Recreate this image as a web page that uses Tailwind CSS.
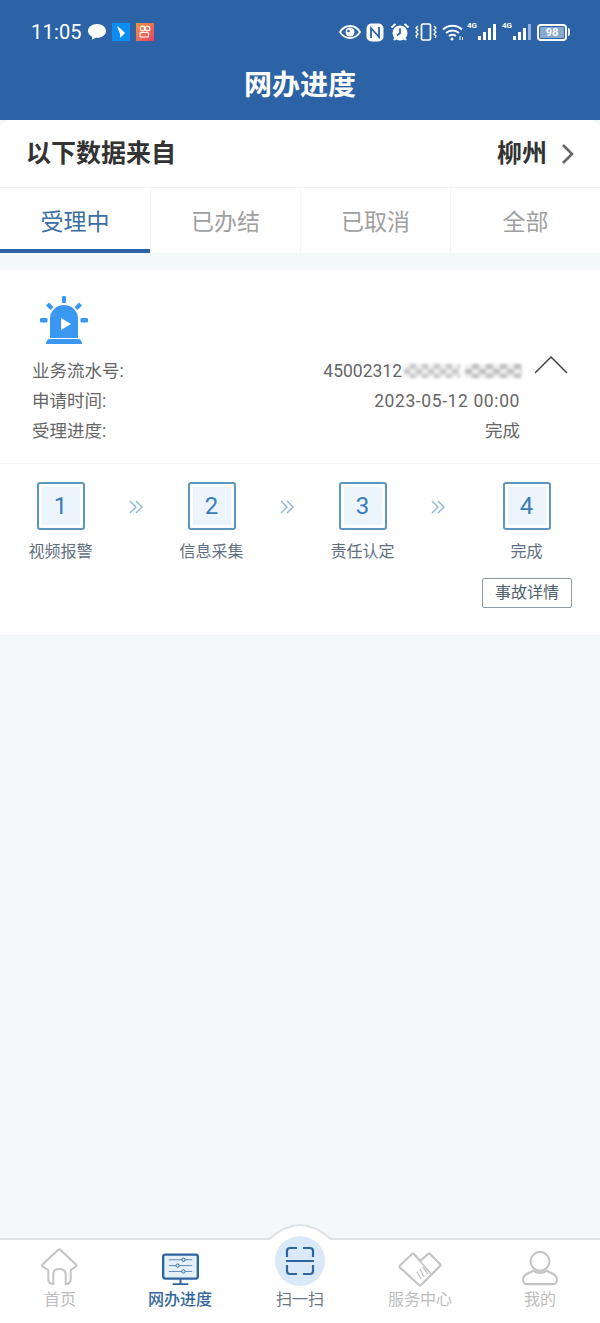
<!DOCTYPE html>
<html lang="zh-CN">
<head>
<meta charset="UTF-8">
<meta name="viewport" content="width=device-width, initial-scale=1.0">
<title>网办进度</title>
<script src="https://cdn.jsdelivr.net/npm/@tailwindcss/browser@4"></script>
</head>
<body class="bg-[#f4f8f9] font-['Roboto','Noto_Sans_CJK_SC',sans-serif]">
<div class="w-[600px] h-[1323px] flex flex-col overflow-hidden">

  <!-- header -->
  <header class="h-[120px] shrink-0 bg-[#2b63a6] text-white">
    <div class="h-[64px] pl-[31px] pr-[30px] flex items-center justify-between">
      <div class="flex items-center">
        <span class="text-[20px] leading-none tracking-[0.2px]">11:05</span>
        <svg class="ml-[5px]" width="20" height="18" viewBox="0 0 20 18"><path d="M10 1C5 1 1 4 1 8c0 2.500 1.700 4.500 4.200 5.700l-.5 3.100L9 14.800h1c5 0 9-3 9-6.800S15 1 10 1z" fill="#fff"/></svg>
        <div class="ml-[5px] w-[18px] h-[18px] bg-[#0d8df0] flex items-center justify-center">
          <svg width="12" height="14" viewBox="0 0 12 14"><path d="M2 1l4 3 4 4-5 5 0-4-3-8z" fill="#fff"/></svg>
        </div>
        <div class="ml-[6px] w-[18px] h-[18px] bg-gradient-to-br from-[#ee9338] to-[#e93a67] flex items-center justify-center">
          <svg width="14" height="14" viewBox="0 0 14 14" fill="none" stroke="#fff" stroke-width="1.200"><circle cx="4.500" cy="3.500" r="2.300"/><circle cx="9.500" cy="3.500" r="2.300"/><rect x="2" y="7.500" width="8.500" height="4.500" rx="1"/></svg>
        </div>
      </div>
      <div class="flex items-center">
        <svg width="22" height="14" viewBox="0 0 22 14"><path d="M1 7c2.500-4 6-6 10-6s7.500 2 10 6c-2.500 4-6 6-10 6S3.500 11 1 7z" fill="none" stroke="#fff" stroke-width="1.800"/><circle cx="11" cy="7" r="4.500" fill="#fff"/><circle cx="9.500" cy="6" r="1.300" fill="#2b63a6"/></svg>
        <svg class="ml-[5px]" width="18" height="19" viewBox="0 0 18 19"><rect x="0.500" y="0.500" width="17" height="18" rx="5" fill="#fff"/><path d="M5 15V5l8 9V4" fill="none" stroke="#2b63a6" stroke-width="1.800"/></svg>
        <svg class="ml-[6px]" width="20" height="20" viewBox="0 0 20 20"><circle cx="10" cy="11" r="7.500" fill="#fff"/><path d="M10 6.500V11l-3 2.500" fill="none" stroke="#2b63a6" stroke-width="1.800"/><path d="M1.500 5.500L5.500 2M18.500 5.500L14.500 2M4 18l2-2M16 18l-2-2" stroke="#fff" stroke-width="2"/></svg>
        <svg class="ml-[5px]" width="22" height="18" viewBox="0 0 22 18" fill="none" stroke="#fff" stroke-width="1.300"><rect x="6.500" y="1" width="9" height="16" rx="1.500" stroke-width="1.700"/><path d="M3 3L1 5l2 2-2 2 2 2-2 2 1 2M19 3l2 2-2 2 2 2-2 2 2 2-1 2"/></svg>
        <svg class="ml-[5px]" width="22" height="17" viewBox="0 0 22 17" fill="none" stroke="#fff" stroke-width="2"><path d="M1 5.500c5.500-5 13.500-5 19 0M4 9c3.800-3.300 9.200-3.300 13 0M7 12c2.200-1.600 4.800-1.600 7 0"/><circle cx="10" cy="15" r="1.500" fill="#fff" stroke="none"/><path d="M18 12v4M20.500 13v3" stroke-width="1"/></svg>
        <div class="ml-[3px] relative w-[29px] h-[16px]">
          <span class="absolute left-0 top-[-2px] text-[8px] leading-none font-bold">4G</span>
          <div class="absolute right-0 bottom-0 flex items-end gap-[2px]">
            <i class="block w-[3px] h-[4px] bg-white"></i><i class="block w-[3px] h-[8px] bg-white"></i><i class="block w-[3px] h-[12px] bg-white"></i><i class="block w-[3px] h-[16px] bg-white"></i>
          </div>
        </div>
        <div class="ml-[6px] relative w-[29px] h-[16px]">
          <span class="absolute left-0 top-[-2px] text-[8px] leading-none font-bold">4G</span>
          <div class="absolute right-0 bottom-0 flex items-end gap-[2px]">
            <i class="block w-[3px] h-[4px] bg-white"></i><i class="block w-[3px] h-[8px] bg-white"></i><i class="block w-[3px] h-[12px] bg-white"></i><i class="block w-[3px] h-[16px] bg-white/50"></i>
          </div>
        </div>
        <div class="ml-[6px] w-[30px] h-[17px] rounded-[4px] border-2 border-white p-[1px]">
          <div class="w-full h-full rounded-[1px] bg-white/45 flex items-center justify-center text-[11px] leading-none font-bold">98</div>
        </div>
        <i class="ml-[1px] block w-[2px] h-[8px] bg-white rounded-r"></i>
      </div>
    </div>
    <h1 class="text-center text-[28px] leading-[43px] font-bold">网办进度</h1>
  </header>

  <main class="flex-1 flex flex-col min-h-0">
    <!-- 数据来源 -->
    <div class="h-[68px] shrink-0 bg-white rounded-t-[10px] border-b border-[#f1f2f3] pl-[26px] pr-[25px] flex items-center justify-between">
      <span class="text-[25px] leading-none font-bold text-[#333]">以下数据来自</span>
      <div class="flex items-center gap-[14px]">
        <span class="text-[25px] leading-none font-bold text-[#333]">柳州</span>
        <svg width="14" height="22" viewBox="0 0 14 22" fill="none" stroke="#666" stroke-width="2.600"><path d="M2 2l9 9-9 9"/></svg>
      </div>
    </div>

    <!-- tabs -->
    <nav class="h-[65px] shrink-0 bg-white grid grid-cols-4 text-[23px] text-[#a0a0a0]">
      <div class="flex items-center justify-center pt-[9px] border-b-4 border-[#2b63a6] text-[#3a6ea5]">受理中</div>
      <div class="flex items-center justify-center pt-[5px] border-l border-[#f5f5f6]">已办结</div>
      <div class="flex items-center justify-center pt-[5px] border-l border-[#f5f5f6]">已取消</div>
      <div class="flex items-center justify-center pt-[5px] border-l border-[#f5f5f6]">全部</div>
    </nav>

    <!-- 事故卡片 -->
    <section class="mt-[17px] h-[366px] shrink-0 bg-white border-b border-[#eef0f4]">
      <div class="h-[194px] border-b border-[#f3f5f7] px-[32px] pt-[26px]">
        <svg class="ml-[7px]" width="50" height="50" viewBox="0 0 50 50">
          <rect x="23" y="0" width="4" height="7" rx="1" fill="#3a97f2"/>
          <rect x="1" y="22" width="7.500" height="4.500" rx="1" fill="#3a97f2"/>
          <rect x="41.500" y="22" width="7.500" height="4.500" rx="1" fill="#3a97f2"/>
          <path d="M7 9.500l3-3 4.500 4.500-3 3z" fill="#3a97f2"/>
          <path d="M43 9.500l-3-3-4.500 4.500 3 3z" fill="#3a97f2"/>
          <path d="M11 42V23a14 14 0 0128 0v19z" fill="#3a97f2"/>
          <path d="M7 48c0-3 1.500-5 4-5h28c2.500 0 4 2 4 5z" fill="#3a97f2"/>
          <path d="M22 22l10 6-10 6z" fill="#fff"/>
        </svg>
        <div class="mt-[10px] relative pr-[48px] text-[17.500px] leading-[30px] text-[#666]">
          <div class="flex justify-between">
            <span>业务流水号:</span>
            <span class="flex items-center">45002312<span class="ml-[2px] mr-[-2px] flex items-center gap-[5px] blur-[1.500px]"><i class="block w-[56px] h-[14px] bg-[repeating-conic-gradient(#c4c4c4_0_25%,#f2f2f2_0_50%)] bg-[length:12px_10px]"></i><i class="block w-[57px] h-[14px] bg-[repeating-conic-gradient(#bcbcbc_0_25%,#f0f0f0_0_50%)] bg-[length:14px_10px]"></i></span></span>
          </div>
          <div class="flex justify-between"><span>申请时间:</span><span class="tracking-[0.6px]">2023-05-12 00:00</span></div>
          <div class="flex justify-between"><span>受理进度:</span><span>完成</span></div>
          <svg class="absolute right-0 top-[-1px]" width="34" height="20" viewBox="0 0 34 20" fill="none" stroke="#444" stroke-width="1.500"><path d="M1 18L17 2l16 16"/></svg>
        </div>
      </div>

      <!-- 步骤 -->
      <div class="pt-[18px]">
        <div class="flex items-start pl-[29px] text-[16px] text-[#5f6f80]">
          <div class="w-[63px] flex flex-col items-center">
            <div class="w-[48px] h-[48px] rounded-[3px] border-2 border-[#5b97bf] p-[3px]"><div class="w-full h-full bg-[#edf5fc] flex items-center justify-center text-[24px] leading-none text-[#3a7cbd]">1</div></div>
            <span class="mt-[12px] leading-[20px] whitespace-nowrap">视频报警</span>
          </div>
          <div class="w-[88px] h-[50px] flex items-center justify-center">
            <svg width="14" height="14" viewBox="0 0 14 14" fill="none" stroke="#8db5da" stroke-width="1.400"><path d="M1 1l6 6-6 6M7 1l6 6-6 6"/></svg>
          </div>
          <div class="w-[63px] flex flex-col items-center">
            <div class="w-[48px] h-[48px] rounded-[3px] border-2 border-[#5b97bf] p-[3px]"><div class="w-full h-full bg-[#edf5fc] flex items-center justify-center text-[24px] leading-none text-[#3a7cbd]">2</div></div>
            <span class="mt-[12px] leading-[20px] whitespace-nowrap">信息采集</span>
          </div>
          <div class="w-[88px] h-[50px] flex items-center justify-center">
            <svg width="14" height="14" viewBox="0 0 14 14" fill="none" stroke="#8db5da" stroke-width="1.400"><path d="M1 1l6 6-6 6M7 1l6 6-6 6"/></svg>
          </div>
          <div class="w-[63px] flex flex-col items-center">
            <div class="w-[48px] h-[48px] rounded-[3px] border-2 border-[#5b97bf] p-[3px]"><div class="w-full h-full bg-[#edf5fc] flex items-center justify-center text-[24px] leading-none text-[#3a7cbd]">3</div></div>
            <span class="mt-[12px] leading-[20px] whitespace-nowrap">责任认定</span>
          </div>
          <div class="w-[88px] h-[50px] flex items-center justify-center">
            <svg width="14" height="14" viewBox="0 0 14 14" fill="none" stroke="#8db5da" stroke-width="1.400"><path d="M1 1l6 6-6 6M7 1l6 6-6 6"/></svg>
          </div>
          <div class="ml-[13px] w-[63px] flex flex-col items-center">
            <div class="w-[48px] h-[48px] rounded-[3px] border-2 border-[#5b97bf] p-[3px]"><div class="w-full h-full bg-[#edf5fc] flex items-center justify-center text-[24px] leading-none text-[#3a7cbd]">4</div></div>
            <span class="mt-[12px] leading-[20px] whitespace-nowrap">完成</span>
          </div>
        </div>
        <div class="mt-[16px] pr-[28px] flex justify-end">
          <button class="w-[90px] h-[30px] rounded-[2px] border border-[#8e9aa3] text-[16px] leading-none text-[#4f5f6c]">事故详情</button>
        </div>
      </div>
    </section>

    <div class="flex-1"></div>

    <!-- 底部导航 -->
    <footer class="relative h-[85px] shrink-0 bg-white border-t-2 border-[#dfe2e5] grid grid-cols-5 text-[16px] text-[#bdbdbd]">
      <svg class="absolute left-[266px] top-[-16px]" width="68" height="18" viewBox="0 0 68 18"><path d="M0 18C12 6 22 1 34 1s22 5 34 17z" fill="#fff"/><path d="M2 16C13 6 23 1 34 1s21 5 32 15" fill="none" stroke="#dfe2e5" stroke-width="2"/></svg>
      <div class="flex flex-col items-center pt-[7px]">
        <svg width="40" height="40" viewBox="0 0 40 40" fill="none" stroke="#c4c4c4" stroke-width="2"><path d="M8.300 23V32q0 5 5 5V27q0-5 6-5t6.400 5V37q5 0 5-5V23l5.300-3.500q1-1 0-2L20 2.500q-.7-.7-1.400 0L2.500 17.500q-1 1 0 2z"/></svg>
        <span class="mt-[3px] leading-[20px]">首页</span>
      </div>
      <div class="flex flex-col items-center pt-[13px] text-[#34689f]">
        <svg width="37" height="33" viewBox="0 0 38 33" fill="none"><rect x="1.200" y="1.200" width="35.600" height="24.600" rx="2" fill="#e6f0f9" stroke="#2f659e" stroke-width="2.400"/><path d="M7 6.500h24M7 12.500h24M7 18.500h24" stroke="#5b8ab8"/><circle cx="22" cy="6.500" r="1.700" fill="#e6f0f9" stroke="#2f659e"/><circle cx="16" cy="12.500" r="1.700" fill="#e6f0f9" stroke="#2f659e"/><circle cx="22" cy="18.500" r="1.700" fill="#e6f0f9" stroke="#2f659e"/><path d="M19 26v5M11 31.500h16" stroke="#2f659e" stroke-width="2"/></svg>
        <span class="mt-[4px] leading-[20px] font-medium">网办进度</span>
      </div>
      <div class="relative flex flex-col items-center text-[#6b7784]">
        <div class="mt-[-4px] w-[50px] h-[50px] rounded-full bg-[#d9e9fa] flex items-center justify-center">
          <svg width="30" height="30" viewBox="0 0 30 30" fill="none" stroke="#2f659e" stroke-width="2.200"><path d="M12 2H5c-2 0-3 1-3 3v6M18 2h7c2 0 3 1 3 3v6M12 28H5c-2 0-3-1-3-3v-6M18 28h7c2 0 3-1 3-3v-6M1 15h28"/></svg>
        </div>
        <span class="mt-[4px] leading-[20px]">扫一扫</span>
      </div>
      <div class="flex flex-col items-center pt-[12px]">
        <svg width="44" height="35" viewBox="0 0 44 35" fill="none" stroke="#c4c4c4" stroke-width="2.200"><path d="M14 2L2 13.500q-1 1 0 2L21 33q1 1 2 0L42 14q1-1 0-2L32 2q-1-1-2 0l-8 7-6-7q-1-1-2 0z"/><path d="M22 9l11 13" stroke-width="1.600"/><path d="M22 17l4 8M25 15l5 7M19 20l4 7" stroke-width="1.400"/></svg>
        <span class="mt-[3px] leading-[20px]">服务中心</span>
      </div>
      <div class="flex flex-col items-center pt-[10px]">
        <svg width="36" height="36" viewBox="0 0 38 36" fill="none" stroke="#c4c4c4" stroke-width="2.200"><circle cx="19" cy="11" r="10"/><path d="M12 21c-5 2-11 4-11 9 0 3 2 5 4 5h28c2 0 4-2 4-5 0-5-6-7-11-9-3 3-11 3-14 0z"/></svg>
        <span class="mt-[4px] leading-[20px]">我的</span>
      </div>
    </footer>
  </main>
</div>
</body>
</html>
